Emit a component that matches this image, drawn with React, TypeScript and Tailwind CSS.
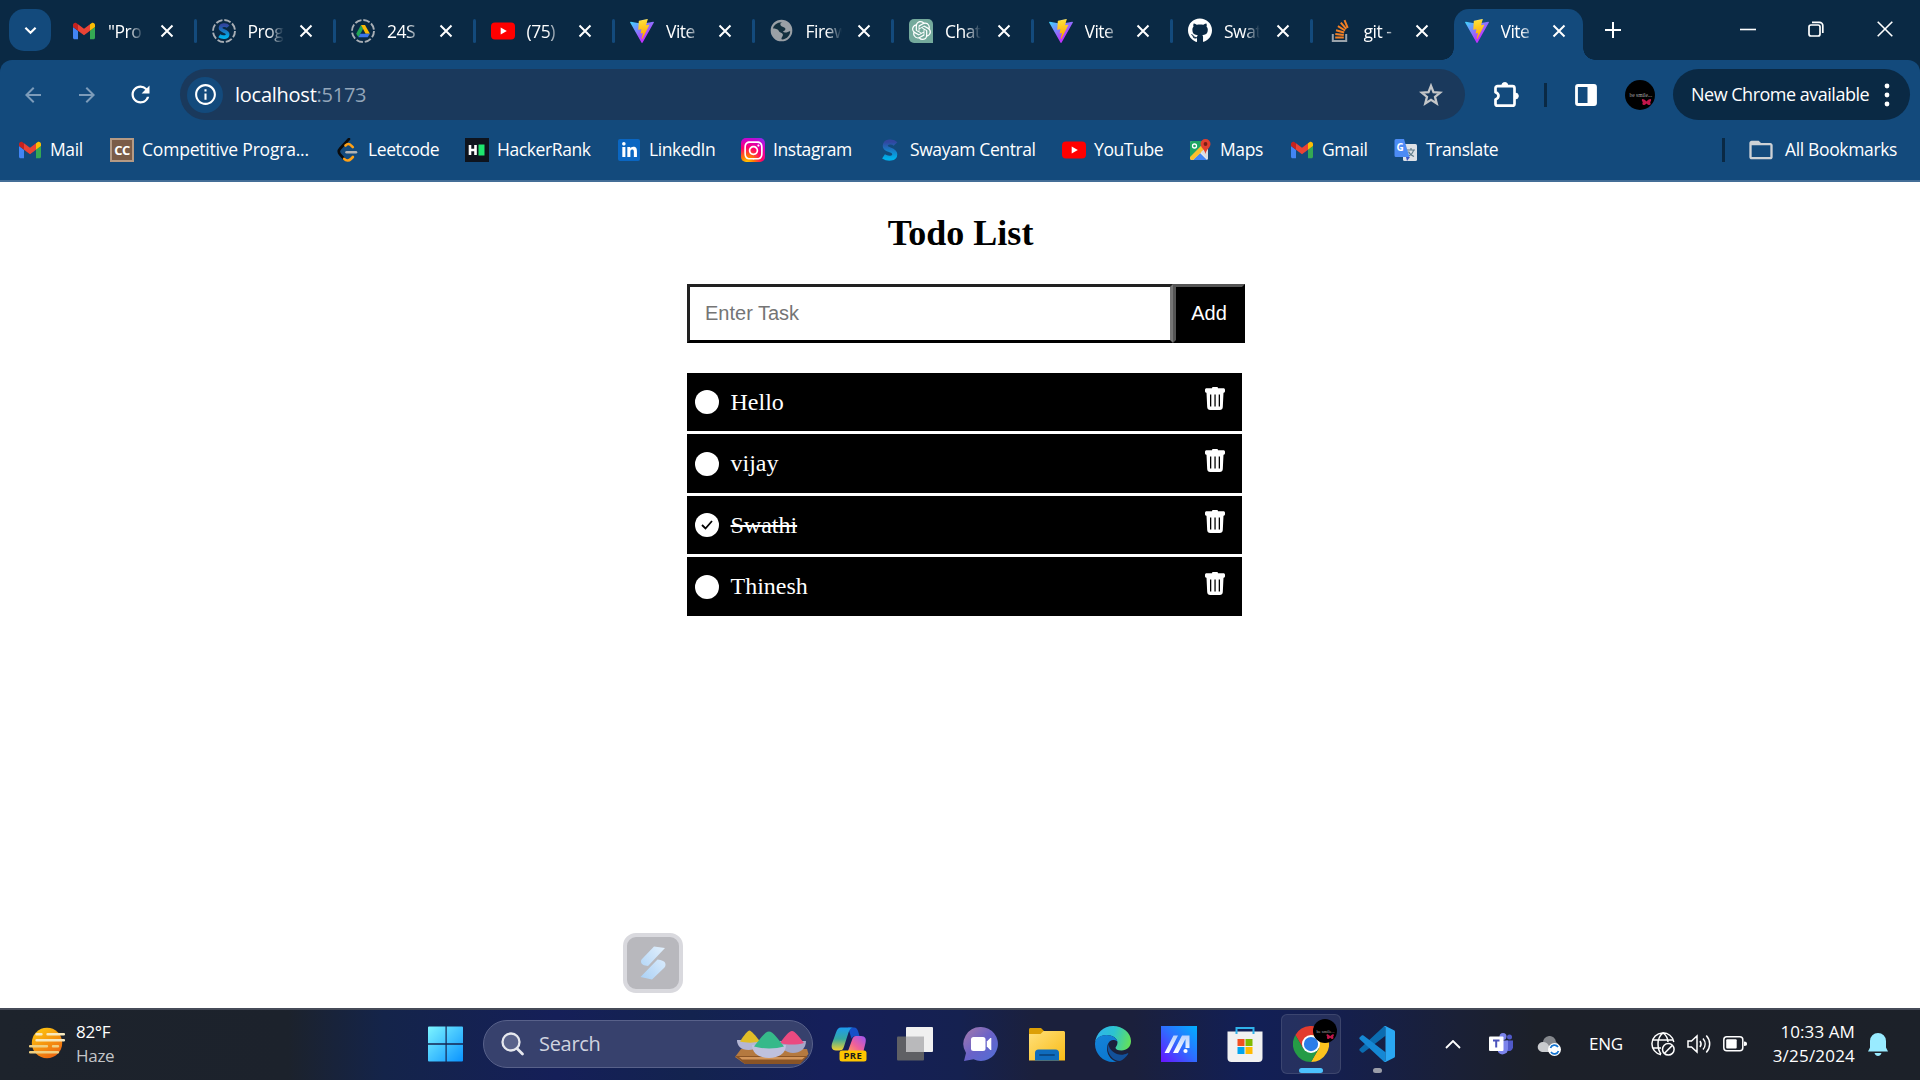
import React from "react";
import { MdArrowBack, MdArrowForward, MdRefresh, MdInfoOutline, MdFolderOpen } from "react-icons/md";
import { FaGithub, FaInstagram, FaLinkedinIn } from "react-icons/fa";
import { SiOpenai } from "react-icons/si";

type IconProps = { className?: string };

const Gmail = () => (
  <svg viewBox="52 42 88 66" className="w-[22px] h-5">
    <path fill="#4285f4" d="M58 108h14V74L52 59v43c0 3.32 2.69 6 6 6" />
    <path fill="#34a853" d="M120 108h14c3.32 0 6-2.69 6-6V59l-20 15" />
    <path fill="#fbbc04" d="M120 48v26l20-15v-8c0-7.42-8.47-11.65-14.4-7.2" />
    <path fill="#ea4335" d="M72 74V48l24 18 24-18v26L96 92" />
    <path fill="#c5221f" d="M52 51v8l20 15V48l-5.6-4.2c-5.94-4.45-14.4-.22-14.4 7.2" />
  </svg>
);

const Vite = () => (
  <svg viewBox="0 0 256 257" className="size-6">
    <defs>
      <linearGradient id="viteA" x1="-.8%" x2="57.6%" y1="7.7%" y2="78.4%">
        <stop offset="0" stopColor="#41d1ff" />
        <stop offset="1" stopColor="#bd34fe" />
      </linearGradient>
      <linearGradient id="viteB" x1="43.4%" x2="50.3%" y1="2.2%" y2="89%">
        <stop offset="0" stopColor="#ffea83" />
        <stop offset=".083" stopColor="#ffdd35" />
        <stop offset="1" stopColor="#ffa800" />
      </linearGradient>
    </defs>
    <path fill="url(#viteA)" d="M255.153 37.938L134.897 252.976c-2.483 4.44-8.862 4.466-11.382.048L.875 37.958c-2.746-4.814 1.371-10.646 6.827-9.67l120.385 21.517a6.537 6.537 0 0 0 2.322-.004l117.867-21.483c5.438-.991 9.574 4.796 6.877 9.62Z" />
    <path fill="url(#viteB)" d="M185.432.063L96.44 17.501a3.268 3.268 0 0 0-2.634 3.014l-5.474 92.456a3.268 3.268 0 0 0 3.997 3.378l24.777-5.718c2.318-.535 4.413 1.507 3.936 3.838l-7.361 36.047c-.495 2.426 1.782 4.5 4.151 3.78l15.304-4.649c2.372-.72 4.652 1.36 4.15 3.788l-11.698 56.621c-.732 3.542 3.979 5.473 5.943 2.437l1.313-2.028l72.516-144.72c1.215-2.423-.88-5.186-3.54-4.672l-25.505 4.922c-2.396.462-4.435-1.77-3.759-4.114l16.646-57.705c.677-2.35-1.37-4.583-3.769-4.113Z" />
  </svg>
);

const SwayamMark = () => (
  <>
    <linearGradient id="swy" x1="0" x2="0" y1="0" y2="1">
      <stop offset="0" stopColor="#31469f" />
      <stop offset="1" stopColor="#00aeea" />
    </linearGradient>
    <path d="M17.500 6C15 3.200 7.500 3 7.200 7.800c-.2 4.700 9.600 3.200 9.600 8.400 0 4.600-6.800 5.200-11.300 2.200" fill="none" stroke="url(#swy)" strokeWidth="5" />
  </>
);

const DashedRing = () => (
  <circle cx="12" cy="12" r="11" fill="none" stroke="#a9afb6" strokeWidth="1.900" strokeDasharray="6.700 1.940" />
);

const SwayamTab = () => (
  <svg viewBox="0 0 24 24" className="size-6">
    <DashedRing />
    <g transform="translate(3.200 3.200) scale(.74)"><SwayamMark /></g>
  </svg>
);

const DriveTab = () => (
  <svg viewBox="0 0 24 24" className="size-6">
    <DashedRing />
    <path d="M10 6 5.200 14.800l2.200 3.400L12.200 9.800z" fill="#22a455" />
    <path d="M10 6h4l4.900 8.800h-4.300z" fill="#fcb904" />
    <path d="M9.300 14.800h9.600l-2.200 3.400H7.400z" fill="#3b74e8" />
  </svg>
);

const YouTube = () => (
  <svg viewBox="0 0 24 18" className="w-6 h-[18px]">
    <rect width="24" height="17" y=".5" rx="4" fill="#f00" />
    <path d="M9.700 5.400v7.200L15.800 9z" fill="#fff" />
  </svg>
);

const Globe = () => (
  <svg viewBox="0 0 24 24" className="size-[23px]">
    <circle cx="12" cy="12" r="10.300" fill="#9aa0a6" stroke="#9aa0a6" strokeWidth="2" />
    <path d="M13 3.500c-3 .5-2.500 3-1 4s3.500 1 4 2.500c.5 1.500-1 2.500-2.500 3 1.500 2 5 1 7.500-.5.300 4-3 8.500-8.500 9-1.500-1.500 1-3 1-5s-2.500-2-3.500-3-1.500-3.500-6.800-3.500C3.500 6.500 8 3 13 3.500z" fill="#14303f" />
  </svg>
);

const ChatGPT = () => (
  <span className="size-6 rounded-[5px] rounded-br-none bg-[#74aa9c] flex items-center justify-center text-white">
    <SiOpenai className="size-[19px]" />
  </span>
);

const StackOverflow = () => (
  <svg viewBox="0 0 24 24" className="size-6">
    <path d="M4.800 15v6.900h13.400V15" fill="none" stroke="#9aa3ab" strokeWidth="2" />
    <g stroke="#f48024" strokeWidth="2" fill="none">
      <path d="M7.200 18.500h8.600M7.300 15l8.500.9M8 11.200l8.200 2.300M9.900 7.200l7.200 4.300M12.800 3.600l5.400 6.200M16.500 1.200l3.200 7.700" />
    </g>
  </svg>
);

const CC = () => (
  <span className="size-6 bg-[#7a5c48] border-2 border-[#b59a84] flex items-center justify-center text-white text-[13px] font-bold leading-none tracking-[-0.5px]">CC</span>
);

const Leet = () => (
  <svg viewBox="0 0 24 24" className="size-6">
    <path d="M13 1 4.200 10.500c-2 2.200-2 4 0 6.100l4 4.200" fill="none" stroke="#0b0b0b" strokeWidth="2.600" strokeLinecap="round" />
    <path d="M9.500 7.500c2-2 4-1.800 5.500-.2l1.800 1.800" fill="none" stroke="#ffa116" strokeWidth="2.600" strokeLinecap="round" />
    <path d="M8.200 20.800c2 2.200 4.800 2.200 6.700.2l2-2" fill="none" stroke="#ffa116" strokeWidth="2.600" strokeLinecap="round" />
    <path d="M10.500 14.300H20" stroke="#b3b3b3" strokeWidth="2.500" strokeLinecap="round" />
  </svg>
);

const Hacker = () => (
  <svg viewBox="0 0 24 24" className="size-6">
    <path fill="#0e141e" d="M0 0h24v24H0z" />
    <path d="M5 7v10M10.500 7v10M5 12h5.500" stroke="#fff" strokeWidth="2.600" />
    <path fill="#1ee66f" d="M13.500 6.500h6v11h-6z" />
  </svg>
);

const LinkedIn = () => (
  <span className="size-[22px] rounded-[2px] bg-[#0a66c2] flex items-center justify-center text-white">
    <FaLinkedinIn className="size-[17px]" />
  </span>
);

const Insta = () => (
  <span className="size-6 rounded-[5px] bg-[radial-gradient(circle_at_25%_105%,#ffd600_0%,#ff7a00_22%,#ff0069_50%,#d300c5_75%,#7638fa_100%)] flex items-center justify-center text-white">
    <FaInstagram className="size-[21px]" />
  </span>
);

const Swayam = () => (
  <svg viewBox="0 0 24 24" className="size-6"><SwayamMark /></svg>
);

const Maps = () => (
  <svg viewBox="0 0 24 24" className="size-6">
    <clipPath id="mapc"><rect x="2" y="3" width="18" height="19" rx="2" /></clipPath>
    <g clipPath="url(#mapc)">
      <path fill="#e8eaed" d="M0 0h24v24H0z" />
      <path fill="#1fa463" d="M2 3h16L2 20z" />
      <path fill="#4285f4" d="m5 22 7-7 7 7z" />
      <path fill="#fbc02d" d="M2 19 17 4l3 4L5 22H2z" />
      <path fill="#dadce0" d="m13 14 7-6v14z" />
    </g>
    <circle cx="6.500" cy="8" r="2" fill="none" stroke="#fff" strokeWidth="1.300" />
    <path fill="#e1402f" d="M17.500 1a5 5 0 0 0-5 5c0 3.500 4 5 5 10 1-5 5-6.500 5-10a5 5 0 0 0-5-5z" />
    <circle cx="17.500" cy="6" r="1.900" fill="#7b1d15" />
  </svg>
);

const Translate = () => (
  <svg viewBox="0 0 24 24" className="size-6">
    <rect x="9" y="6" width="14" height="17" rx="1.500" fill="#dde1e6" />
    <path d="M13 12h8M17 10v2M19.500 12c-.5 3-3 5-5 6M14.500 13.500c1 2.500 3 4 5.500 5" stroke="#607d8b" strokeWidth="1.200" fill="none" />
    <path fill="#3a53c5" d="m12 19 4 0-3 4z" />
    <path fill="#4c8bf5" d="M2 1h8l5.500 18H2a1.500 1.500 0 0 1-1.500-1.500v-15A1.500 1.500 0 0 1 2 1z" />
    <text x="2.500" y="13" fontSize="10" fontWeight="700" fill="#fff" fontFamily="Open Sans, sans-serif">G</text>
  </svg>
);

const Cross = ({ className = "" }: IconProps) => (
  <svg viewBox="0 0 14 14" className={className}>
    <path d="m1.500 1.500 11 11m0-11-11 11" stroke="#fff" strokeWidth="2" />
  </svg>
);

const tabs: { icon: React.ReactNode; title: string }[] = [
  { icon: <Gmail />, title: '"Pro' },
  { icon: <SwayamTab />, title: "Prog" },
  { icon: <DriveTab />, title: "24S" },
  { icon: <YouTube />, title: "(75)" },
  { icon: <Vite />, title: "Vite" },
  { icon: <Globe />, title: "Firew" },
  { icon: <ChatGPT />, title: "Chat" },
  { icon: <Vite />, title: "Vite" },
  { icon: <FaGithub className="size-[25px] text-white" />, title: "Swat" },
  { icon: <StackOverflow />, title: "git -" },
];

const Tab = ({ icon, title }: { icon: React.ReactNode; title: string }) => (
  <>
    <span className="w-6 h-6 flex items-center justify-center shrink-0">{icon}</span>
    <span className="ml-3 w-[47px] shrink-0 whitespace-nowrap text-[17.500px] tracking-[-0.5px] leading-6 text-white [mask-image:linear-gradient(to_right,black_20px,transparent_36px)]">{title}</span>
    <Cross className="ml-[4.500px] size-[14px] shrink-0" />
  </>
);

const bookmarks = [
  { icon: <Gmail />, label: "Mail", w: "w-[92px]" },
  { icon: <CC />, label: "Competitive Progra...", w: "w-[226px]" },
  { icon: <Leet />, label: "Leetcode", w: "w-[129px]" },
  { icon: <Hacker />, label: "HackerRank", w: "w-[152px]" },
  { icon: <LinkedIn />, label: "LinkedIn", w: "w-[124px]" },
  { icon: <Insta />, label: "Instagram", w: "w-[137px]" },
  { icon: <Swayam />, label: "Swayam Central", w: "w-[184px]" },
  { icon: <YouTube />, label: "YouTube", w: "w-[126px]" },
  { icon: <Maps />, label: "Maps", w: "w-[102px]" },
  { icon: <Gmail />, label: "Gmail", w: "w-[104px]" },
  { icon: <Translate />, label: "Translate", w: "w-[110px]" },
];

const Avatar = ({ className = "" }: IconProps) => (
  <svg viewBox="0 0 30 30" className={className}>
    <circle cx="15" cy="15" r="15" fill="#000" />
    <text x="4.500" y="17" fontSize="5.500" fill="#aaa" fontFamily="Liberation Serif, serif">be smile...</text>
    <path d="M21.500 23.500c-3 3-5 1-3.700-1.200-2.300-3.300-.3-5 3.700-.8 4-4.200 6-2.500 3.700.8 1.300 2.200-.7 4.200-3.700 1.200z" fill="#c2164a" />
  </svg>
);

function BrowserChrome() {
  return (
    <header className="h-[182px] bg-[#0a2944] text-white font-['Open_Sans','Noto_Sans',sans-serif]">
      <div className="h-[60px] flex">
        <div className="w-[56px] pl-[9px] pt-[9px] shrink-0">
          <button className="w-[42px] h-[42px] rounded-[15px] bg-[#134a7c] flex items-center justify-center">
            <svg viewBox="0 0 14 9" className="w-[13px] h-[9px]"><path d="m1.500 1.500 5.500 5.500 5.500-5.500" stroke="#fff" strokeWidth="2.300" fill="none" /></svg>
          </button>
        </div>
        <div className="flex shrink-0 pt-px">
          {tabs.map((t, i) => (
            <div key={i} className={i === 9 ? "w-[142px] flex items-center pl-4" : "w-[139.500px] flex items-center pl-4"}>
              <Tab {...t} />
              {i < 9 && <span className="ml-auto -mr-px w-[3px] h-6 rounded bg-[#134a7c]" />}
            </div>
          ))}
        </div>
        <div className="relative mt-[9px] h-[51px] w-[129px] shrink-0 rounded-t-[15px] bg-[#134a7c] flex items-center pl-[11px] pb-[7px]">
          <span className="absolute -left-3 bottom-0 size-3 bg-[radial-gradient(circle_at_0_0,transparent_11.500px,#134a7c_12px)]" />
          <span className="absolute -right-3 bottom-0 size-3 bg-[radial-gradient(circle_at_100%_0,transparent_11.500px,#134a7c_12px)]" />
          <Tab icon={<Vite />} title="Vite" />
        </div>
        <svg viewBox="0 0 16 16" className="ml-[22px] mt-[22px] size-4 shrink-0"><path d="M8 0v16M0 8h16" stroke="#fff" strokeWidth="2" /></svg>
        <div className="ml-auto flex items-start pr-[27px] pt-[21px] shrink-0">
          <svg viewBox="0 0 16 16" className="size-4 mr-[52px]"><path d="M0 8.500h16" stroke="#fff" strokeWidth="1.600" /></svg>
          <svg viewBox="0 0 16 16" className="size-4 mr-[53px]"><g fill="none" stroke="#fff" strokeWidth="1.700"><rect x="1" y="4" width="11" height="11" rx="2" /><path d="M4 1.300h7.500a3.300 3.300 0 0 1 3.300 3.300V12" /></g></svg>
          <svg viewBox="0 0 16 16" className="size-4"><path d="m.7.7 14.600 14.600m0-14.600L.7 15.300" stroke="#fff" strokeWidth="1.600" /></svg>
        </div>
      </div>
      <div className="h-[122px] rounded-t-[12px] bg-[#134a7c] border-b-2 border-[#446e97]">
        <div className="h-[69px] flex items-center pl-[21px] pr-[10px]">
          <MdArrowBack className="size-6 text-[#7d9cba]" />
          <MdArrowForward className="ml-[30px] size-6 text-[#7d9cba]" />
          <MdRefresh className="ml-[28px] size-[27px]" />
          <div className="ml-[26px] w-[1285px] h-[51px] rounded-full bg-[#1a395c] flex items-center pl-[7px]">
            <span className="size-9 rounded-full bg-[#134a7c] flex items-center justify-center">
              <MdInfoOutline className="size-[25px]" />
            </span>
            <span className="ml-[12px] text-[20px] tracking-[-0.250px]">localhost<span className="text-[#93a6ba]">:5173</span></span>
            <svg viewBox="0 0 24 24" className="ml-auto mr-[22px] size-6"><path d="m12 2.800 2.500 6.300 6.700.5-5.200 4.300 1.700 6.600L12 16.900l-5.700 3.600L8 13.900 2.800 9.600l6.700-.5z" fill="none" stroke="#c4c6c8" strokeWidth="2.300" /></svg>
          </div>
          <svg viewBox="0 0 26 26" className="ml-[28px] size-[26px]">
            <path d="M4.500 4.200h15a2 2 0 0 1 2 2v15.500a2 2 0 0 1-2 2h-15a2 2 0 0 1-2-2v-4.200c4-1.500 4-5.800 0-7.300v-4a2 2 0 0 1 2-2z" fill="none" stroke="#fff" strokeWidth="2.700" strokeLinejoin="round" />
            <path d="M8.800 3.500a3 3 0 0 1 6 0zM22.300 11a3 3 0 0 1 0 6z" fill="#fff" stroke="#fff" />
          </svg>
          <span className="ml-[25px] w-[3px] h-6 bg-[#0a2944]" />
          <svg viewBox="0 0 22 22" className="ml-[28px] size-[22px]"><rect x="1.500" y="1.500" width="19" height="19" rx="1.500" fill="none" stroke="#fff" strokeWidth="2.800" /><path d="M12.500 1H21v20h-8.500z" fill="#fff" /></svg>
          <Avatar className="ml-[28px] size-[30px]" />
          <div className="ml-[18px] w-[237px] h-[51px] shrink-0 rounded-full bg-[#0a2944] flex items-center pl-[18px]">
            <span className="text-[18px] tracking-[-0.500px] whitespace-nowrap w-[193px]">New Chrome available</span>
            <svg viewBox="0 0 6 24" className="w-[6px] h-6"><circle cx="3" cy="3" r="2.400" fill="#fff" /><circle cx="3" cy="12" r="2.400" fill="#fff" /><circle cx="3" cy="21" r="2.400" fill="#fff" /></svg>
          </div>
        </div>
        <nav className="h-[42px] flex items-center pl-[18px] text-[17.500px] tracking-[-0.400px] whitespace-nowrap">
          {bookmarks.map((b) => (
            <div key={b.label} className={`${b.w} shrink-0 flex items-center`}>
              <span className="w-6 h-6 flex items-center justify-center">{b.icon}</span>
              <span className={b.label === "Competitive Progra..." ? "ml-2 pb-0.5 tracking-[-0.200px]" : "ml-2 pb-0.5"}>{b.label}</span>
            </div>
          ))}
          <span className="ml-[218px] w-[3px] h-6 bg-[#0a2944]" />
          <MdFolderOpen className="ml-[22px] size-[28px] text-[#cdd1d5]" />
          <span className="ml-[10px] pb-0.5 tracking-[-0.350px]">All Bookmarks</span>
        </nav>
      </div>
    </header>
  );
}

const tasks = [
  { name: "Hello", done: false, h: "h-[58px]" },
  { name: "vijay", done: false, h: "h-[59px]" },
  { name: "Swathi", done: true, h: "h-[58px]" },
  { name: "Thinesh", done: false, h: "h-[59px]" },
];

const Trash = () => (
  <svg viewBox="0 0 20 23" className="w-5 h-[23px]">
    <path fill="#fff" fillRule="evenodd" d="M7 1.200C7 .5 7.500 0 8.200 0h3.600c.7 0 1.200.5 1.200 1.200h5.500c.8 0 1.500.7 1.500 1.500v1.600c0 .8-.7 1.500-1.500 1.500L17.800 20c0 1.700-1.300 3-3 3H5.200c-1.700 0-3-1.300-3-3L1.500 5.800C.7 5.800 0 5.100 0 4.300V2.700c0-.8.7-1.500 1.500-1.500zM5 7.500v12h1.300v-12zM9.400 7.500v12h1.300v-12zM13.700 7.500v12H15v-12z" />
  </svg>
);

function TodoPage() {
  return (
    <main className="h-[826px] bg-white flex flex-col items-center pt-[30px] font-['Liberation_Serif',serif]">
      <h1 className="ml-px text-[36px] font-bold leading-[42px] text-black">Todo List</h1>
      <div className="w-[558px] mt-[30px] ml-[12px] h-[59px] flex font-['Liberation_Sans',sans-serif] text-[20px]">
        <input placeholder="Enter Task" className="w-[486px] h-full rounded-none border-[3px] border-t-[#212121] border-l-[#212121] border-b-black border-r-[#767676] bg-white px-[15px] placeholder:text-[#757575] outline-none" />
        <button className="w-[72px] h-full border-[3px] border-t-[#555] border-l-[#555] border-b-black border-r-black bg-black text-white pb-0.5">Add</button>
      </div>
      <ul className="w-[558px] ml-[12px] mt-[30px] flex flex-col gap-[3px]">
        {tasks.map((t) => (
          <li key={t.name} className={`${t.h} w-[555px] bg-black text-white flex items-center pl-2 pr-[17px]`}>
            <span className="size-6 rounded-full bg-white flex items-center justify-center">
              {t.done && <svg viewBox="0 0 12 10" className="w-3 h-2.5"><path d="m1 5 3.500 3.500L11 1" fill="none" stroke="#000" strokeWidth="1.800" /></svg>}
            </span>
            <span className={t.done ? "ml-[11.500px] text-[24px] leading-7 line-through" : "ml-[11.500px] pb-px text-[24px] leading-7"}>{t.name}</span>
            <span className="ml-auto mb-[7px]"><Trash /></span>
          </li>
        ))}
      </ul>
      <div className="mt-auto mb-[15px] mr-[614px] size-[60px] rounded-[13px] border-4 border-[#d9d9de] bg-[#b8b8bd] flex items-center justify-center">
        <svg viewBox="0 0 26 34" className="w-[26px] h-[34px]">
          <defs><linearGradient id="sk" x1="1" y1="0" x2="0" y2="1"><stop offset="0" stopColor="#e4f1fd" /><stop offset="1" stopColor="#a9d0f5" /></linearGradient></defs>
          <path fill="url(#sk)" d="M14 .5 25 2 8 20c-4-.5-7-1.500-7-4.500 0-1.500.5-2 1.500-3zM12 33.500.500 31 17.500 13.500c4 .5 8 1.500 8 5 0 1.500-.5 2.500-1.500 3.500z" />
        </svg>
      </div>
    </main>
  );
}

const Bowls = () => (
  <svg viewBox="0 0 74 34" className="w-[74px] h-[34px]">
    <path d="M6 19h66l1.500 5-9 10H10L0 27z" fill="#b5793f" />
    <path d="M0 26h73l-8 8H10z" fill="#8a5426" />
    <path d="M4 27h66l-3 2.500H7z" fill="#d3955a" />
    <path d="M2 10h23c0 6-4 10-11.500 10S2 16 2 10z" fill="#b4b6d4" />
    <path d="M5 11.500C9 5 13 .5 14.500.5S21 6 25 11.500c-6 1.500-14 1.500-20 0z" fill="#e0bd28" />
    <path d="M45 11h26c0 8-6 12-13 12s-13-5-13-12z" fill="#a5a7c8" />
    <path d="M45 13C50 6 54 1 57 1s7 6 12 12c-7 2-17 2-24 0z" fill="#ea4a80" />
    <path d="M17 15h34c0 8-7 13-17 13s-17-5-17-13z" fill="#bfc1de" />
    <path d="M19 16.500C25 9 30 1.500 34 1.500s9 7.500 15 15c-8 2.500-22 2.500-30 0z" fill="#36b98a" />
  </svg>
);

const Copilot = () => (
  <svg viewBox="0 0 36 36" className="size-9">
    <defs>
      <linearGradient id="cpA" x1="0" y1="0" x2="0" y2="1"><stop offset="0" stopColor="#1d9bf0" /><stop offset=".5" stopColor="#36a9a0" /><stop offset="1" stopColor="#f5d12e" /></linearGradient>
      <linearGradient id="cpB" x1="1" y1="0" x2="0" y2="1"><stop offset="0" stopColor="#9a55f5" /><stop offset=".6" stopColor="#f0609a" /><stop offset="1" stopColor="#ff9a5a" /></linearGradient>
    </defs>
    <path d="M17 1.500h6c2.500 0 3.500 2 4.200 4l1.300 4.500h-3.300c-2.200 0-3.700.8-4.700 2.500z" fill="#1650c8" />
    <path d="M10 1.500h12.500c-2.800 0-4 2-5 5L13 20.500c-1 3-2 4-5 4H5c-4 0-5-3-4-7L5 6.500c1.200-3.500 2.500-5 5-5z" fill="url(#cpA)" />
    <path d="M25 10h5c4.500 0 5.500 3 4.500 7l-2 8H17l4-11c1-3 2-4 4-4z" fill="url(#cpB)" />
    <rect x="8.500" y="24.500" width="27" height="11" rx="2.500" fill="#fdc500" />
    <text x="12.500" y="33.400" fontSize="9.500" fontWeight="700" letterSpacing=".4" fill="#1b1b1b" fontFamily="Open Sans, sans-serif">PRE</text>
  </svg>
);

const TaskView = () => (
  <svg viewBox="0 0 36 36" className="size-9">
    <rect x="0" y="10.500" width="27" height="24" rx="1" fill="#5f6064" />
    <rect x="9" y="1" width="27" height="25" rx="1" fill="#f0f0f0" />
    <path d="M9 10.500h18V26H10a1 1 0 0 1-1-1z" fill="#b9b9bb" />
  </svg>
);

const Chat = () => (
  <svg viewBox="0 0 36 36" className="size-9">
    <defs><linearGradient id="ch" x1="0" y1="0" x2="1" y2="1"><stop offset="0" stopColor="#a87ba8" /><stop offset=".5" stopColor="#6a62c8" /><stop offset="1" stopColor="#4f6fd8" /></linearGradient></defs>
    <path d="M18 1a17 17 0 1 1-7.500 32.300L1 35l2-8A17 17 0 0 1 18 1z" fill="url(#ch)" />
    <rect x="8" y="11" width="14.500" height="14" rx="2.500" fill="#fff" />
    <path d="m23.800 15.500 3.500-3.500h1v12h-1l-3.500-3.500z" fill="#fff" />
  </svg>
);

const Folder = () => (
  <svg viewBox="0 0 36 36" className="size-9">
    <defs><linearGradient id="fo" x1="0" y1="0" x2="1" y2="1"><stop offset="0" stopColor="#ffe07a" /><stop offset="1" stopColor="#f9bb16" /></linearGradient></defs>
    <path d="M0 3.500C0 2.500.7 2 1.500 2H12l3.500 3.500V10H0z" fill="#dc9f06" />
    <path d="M0 8h11.500l3-3h20c.8 0 1.500.7 1.500 1.500v28H0z" fill="url(#fo)" />
    <path d="M6 34.500V27a3.500 3.500 0 0 1 3.500-3.500h17A3.500 3.500 0 0 1 30 27v7.500z" fill="#0f6cbd" />
    <path d="M11 29h14" stroke="#0a4a87" strokeWidth="1.800" strokeLinecap="round" />
  </svg>
);

const Edge = () => (
  <svg viewBox="0 0 36 36" className="size-9">
    <defs>
      <linearGradient id="eA" x1="0" y1=".3" x2="1" y2=".5"><stop offset="0" stopColor="#2fb4ee" /><stop offset=".5" stopColor="#2cc3d0" /><stop offset="1" stopColor="#62e05c" /></linearGradient>
      <linearGradient id="eB" x1="0" y1="0" x2=".4" y2="1"><stop offset="0" stopColor="#1583d8" /><stop offset="1" stopColor="#0b78d0" /></linearGradient>
    </defs>
    <path d="M0 17C1 7 8.500 0 18 0c10 0 18 7 18 15 0 6-4.500 9.500-9.500 9.500-4 0-6-1.500-6-2.800 0-1 2-2 2-5.200C22.500 12 17 9 11.500 9 5 9 1 13 0 17z" fill="url(#eA)" />
    <path d="M0 18c0-5 4.500-9 11.500-9 6 0 10 3 11 6.500-1.500-1.200-3-1.500-4.500-1.500-3.500 0-6 4-6 9 0 7 6 12.500 10 12.500-1.300.3-2.600.5-4 .5C8 36 0 28 0 18z" fill="url(#eB)" />
    <path d="M13 18c-2 9.500 5 17 12 17 3-1 6-3.800 8.200-7 .3-.6-.2-1-.8-.7-8 4-17-.5-19.400-9.300z" fill="#12509a" />
  </svg>
);

const MyAsus = () => (
  <svg viewBox="0 0 36 36" className="size-9">
    <defs>
      <linearGradient id="as" x1="0" y1="1" x2="1" y2="0"><stop offset="0" stopColor="#6a12ff" /><stop offset=".5" stopColor="#2f6cff" /><stop offset="1" stopColor="#00b0ff" /></linearGradient>
      <linearGradient id="as2" x1="0" y1="1" x2="0" y2="0"><stop offset="0" stopColor="#fff" /><stop offset="1" stopColor="#b9d2ff" /></linearGradient>
    </defs>
    <path d="M0 0h36v36H0z" fill="url(#as)" />
    <path d="m3.500 27 9-17.500H17L8 27zM12 27l9-17.500h7.500V22h-4v-9L17 27z" fill="url(#as2)" />
    <circle cx="24.500" cy="25" r="2.100" fill="#fff" />
  </svg>
);

const Store = () => (
  <svg viewBox="0 0 36 36" className="size-9">
    <path d="M.5 5.500h35V32a4 4 0 0 1-4 4h-27a4 4 0 0 1-4-4z" fill="#f1f1f1" />
    <path d="M9.500 8V2h17v6" fill="none" stroke="#2fb2ea" strokeWidth="2" />
    <path d="M10.500 13h7v7h-7z" fill="#f25022" /><path d="M18.500 13h7v7h-7z" fill="#7fba00" />
    <path d="M10.500 21h7v7h-7z" fill="#00a4ef" /><path d="M18.500 21h7v7h-7z" fill="#ffb900" />
  </svg>
);

const ChromeIcon = () => (
  <svg viewBox="0 0 48 48" className="size-9">
    <path d="M24 12h20.800A24 24 0 0 0 3.200 12l10.400 18z" fill="#e33b2e" />
    <path d="M34.400 30 24 48A24 24 0 0 0 44.800 12H24z" fill="#fcc31e" />
    <path d="M13.600 30 3.200 12A24 24 0 0 0 24 48l10.400-18z" fill="#259b46" />
    <circle cx="24" cy="24" r="12" fill="#fff" /><circle cx="24" cy="24" r="9.500" fill="#2b7de9" />
  </svg>
);

const VSCode = () => (
  <svg viewBox="0 0 36 36" className="size-9">
    <path d="M1 22.500 24.500.8c.6-.5 1.300-.8 2-.8v9.800L4.500 26.500c-.6.500-1.300.4-1.800 0L.8 24.700c-.7-.6-.6-1.500.2-2.200z" fill="#0b6cb0" />
    <path d="M1 13.500 24.500 35.200c.6.5 1.300.8 2 .8v-9.800L4.500 9.500c-.6-.5-1.300-.4-1.800 0L.8 11.300c-.7.6-.6 1.500.2 2.200z" fill="#1588d4" />
    <path d="M26.500 0 35 4.200c.6.3 1 .8 1 1.500v24.600c0 .7-.4 1.200-1 1.500L26.500 36c-.8.200-1.500-.1-2-.7 1 .7 2 0 2-1V1.700c0-1-1-1.700-2-1 .5-.6 1.200-.9 2-.7z" fill="#2aa7f2" />
  </svg>
);

const apps = [<Copilot />, <TaskView />, <Chat />, <Folder />, <Edge />, <MyAsus />, <Store />];

function Taskbar() {
  return (
    <footer className="h-[72px] pb-0.5 border-t-2 border-[#464b58] flex items-center text-white font-['Open_Sans','Noto_Sans',sans-serif] bg-[linear-gradient(90deg,#1d232c_0%,#1c222c_15%,#14244a_20%,#151f58_29%,#13234f_36%,#151f5a_43%,#152150_50%,#1b203c_54%,#1b203c_59%,#121f56_65%,#141f50_69%,#1a2036_76%,#1c2029_80%,#1c2129_100%)]">
      <svg viewBox="0 0 36 32" className="ml-[29px] mb-0.5 w-9 h-8 shrink-0">
        <defs><linearGradient id="sun" x1="0" y1="0" x2=".6" y2="1"><stop offset="0" stopColor="#ffcf10" /><stop offset="1" stopColor="#ee6a10" /></linearGradient></defs>
        <circle cx="18" cy="16" r="15.200" fill="url(#sun)" />
        <g stroke="#f7e9bf" strokeWidth="2.400" strokeLinecap="round"><path d="M7.500 7.300h5M18.500 7.300H35M7.500 13.200H35" /><path d="M1 19.200h17M24 19.200h5M1 25.200h28" stroke="#f0cf80" /></g>
      </svg>
      <div className="ml-[11px] w-[352px] shrink-0 text-[17px] leading-6 tracking-[-0.300px]">
        <div>82°F</div>
        <div className="text-[#c3c5c8]">Haze</div>
      </div>
      <svg viewBox="0 0 36 36" className="size-9 shrink-0">
        <defs><linearGradient id="win" x1="0" y1="0" x2="1" y2="1"><stop offset="0" stopColor="#7df5ff" /><stop offset="1" stopColor="#0a93ff" /></linearGradient></defs>
        <path fill="url(#win)" d="M1 .5h16.500v16.700H0V1.500a1 1 0 0 1 1-1zM18.700.5H34a1 1 0 0 1 1 1v15.700H18.700zM0 18.700h17.500v16.800H1a1 1 0 0 1-1-1zM18.700 18.700H35v15.800a1 1 0 0 1-1 1H18.700z" />
      </svg>
      <div className="ml-[19px] w-[330px] h-12 shrink-0 rounded-full bg-[#37416d] border border-[#58618a] flex items-center pl-[17px] pr-[3px]">
        <svg viewBox="0 0 24 24" className="size-6"><circle cx="10" cy="10" r="8.500" fill="#59628a" stroke="#e6e8ee" strokeWidth="2.300" /><path d="m16 16.500 5.500 5.500" stroke="#e6e8ee" strokeWidth="2.800" strokeLinecap="round" /></svg>
        <span className="ml-[14px] text-[20px] tracking-[-0.300px] text-[#d0d3df]">Search</span>
        <span className="ml-auto mt-[5px]"><Bowls /></span>
      </div>
      <div className="ml-[3px] flex shrink-0">
        {apps.map((a, i) => <span key={i} className="w-[66px] h-[60px] flex items-center justify-center">{a}</span>)}
        <span className="relative ml-[3px] size-[60px] rounded-[6px] bg-white/8 border border-white/10 flex items-center justify-center">
          <ChromeIcon />
          <Avatar className="absolute right-[3px] top-1 size-6" />
          <span className="absolute bottom-0 w-6 h-[5px] rounded-full bg-[#4cc2ff]" />
        </span>
        <span className="relative ml-[3px] w-[66px] h-[60px] flex items-center justify-center">
          <VSCode />
          <span className="absolute bottom-px w-[9px] h-[5px] rounded-full bg-[#9a9da8]" />
        </span>
      </div>
      <svg viewBox="0 0 16 9" className="ml-[35px] w-4 h-[9px] shrink-0"><path d="m1 8 7-7 7 7" fill="none" stroke="#fff" strokeWidth="1.800" /></svg>
      <svg viewBox="0 0 24 22" className="ml-7 w-6 h-[22px] shrink-0">
        <circle cx="14" cy="3.500" r="3.500" fill="#7b83eb" /><circle cx="20.500" cy="4" r="2.500" fill="#5059c9" />
        <path d="M17 7.500h7v7a4 4 0 0 1-6 3z" fill="#5059c9" /><path d="M9 7.500h10V16a5.500 5.500 0 0 1-10 3z" fill="#7b83eb" />
        <rect y="3.500" width="14.500" height="14.500" rx="1" fill="#fff" /><path d="M4 7.500h6.500M7.200 7.500v7" stroke="#4b53bc" strokeWidth="2" />
      </svg>
      <svg viewBox="0 0 24 20" className="ml-6 mt-[3px] w-6 h-5 shrink-0">
        <path d="M6 7a6.500 6.500 0 0 1 13-1 5.500 5.500 0 0 1 1 9H5z" fill="#85888d" /><path d="M5 16A5 5 0 1 1 6.500 6c4 0 6 4 8 10z" fill="#c9cbce" />
        <circle cx="17.500" cy="13.500" r="6.500" fill="#fff" /><path d="M13.500 12a4.200 4.200 0 0 1 7.500-1M21.500 15a4.200 4.200 0 0 1-7.500 1" fill="none" stroke="#1373cf" strokeWidth="1.700" />
      </svg>
      <span className="ml-7 w-[62px] text-[17px] tracking-[-0.200px] shrink-0">ENG</span>
      <svg viewBox="0 0 24 24" className="size-6 shrink-0" fill="none" stroke="#fff" strokeWidth="1.500">
        <path d="M10 22.700A11 11 0 1 1 22.800 10M12 1C8 4 7 8 7 12s.7 7 3 10M12 1c3 2 4.700 5 5 9M2 8h20M2 16h8" /><circle cx="17.300" cy="17.300" r="5.800" /><path d="m13.500 21.200 7.600-7.600" />
      </svg>
      <svg viewBox="0 0 24 20" className="ml-3 w-6 h-5 shrink-0" fill="none" stroke="#fff" strokeWidth="1.500">
        <path d="M1 7h3.500L10 2v16l-5.500-5H1zM13 7c1.300 1.800 1.300 4.200 0 6M16 4.500c2.800 3.300 2.800 7.700 0 11M19.300 1.500c4.500 5 4.500 12 0 17" />
      </svg>
      <svg viewBox="0 0 24 16" className="ml-3 w-6 h-4 shrink-0">
        <rect x=".8" y=".8" width="19" height="14" rx="3" fill="none" stroke="#fff" strokeWidth="1.500" /><rect x="3.200" y="3.200" width="10.500" height="9.300" rx="1" fill="#fff" /><path d="M21 5.500c2.500 0 3 1 3 2.300s-.5 2.300-3 2.300z" fill="#fff" />
      </svg>
      <div className="w-[108px] shrink-0 text-right text-[17px] leading-6 whitespace-nowrap">
        <div className="tracking-[0.100px]">10:33 AM</div>
        <div className="tracking-[0.200px]">3/25/2024</div>
      </div>
      <svg viewBox="0 0 20 23" className="ml-[13px] w-5 h-[23px] shrink-0"><path d="M10 0a8 8 0 0 1 8 8v6.500l2 4H0l2-4V8a8 8 0 0 1 8-8zM6.500 20h7c-.5 2-2 3-3.500 3s-3-1-3.500-3z" fill="#99ebff" /></svg>
    </footer>
  );
}

export default function App() {
  return (
    <div className="w-[1920px] h-[1080px] overflow-hidden bg-white">
      <BrowserChrome />
      <TodoPage />
      <Taskbar />
    </div>
  );
}
